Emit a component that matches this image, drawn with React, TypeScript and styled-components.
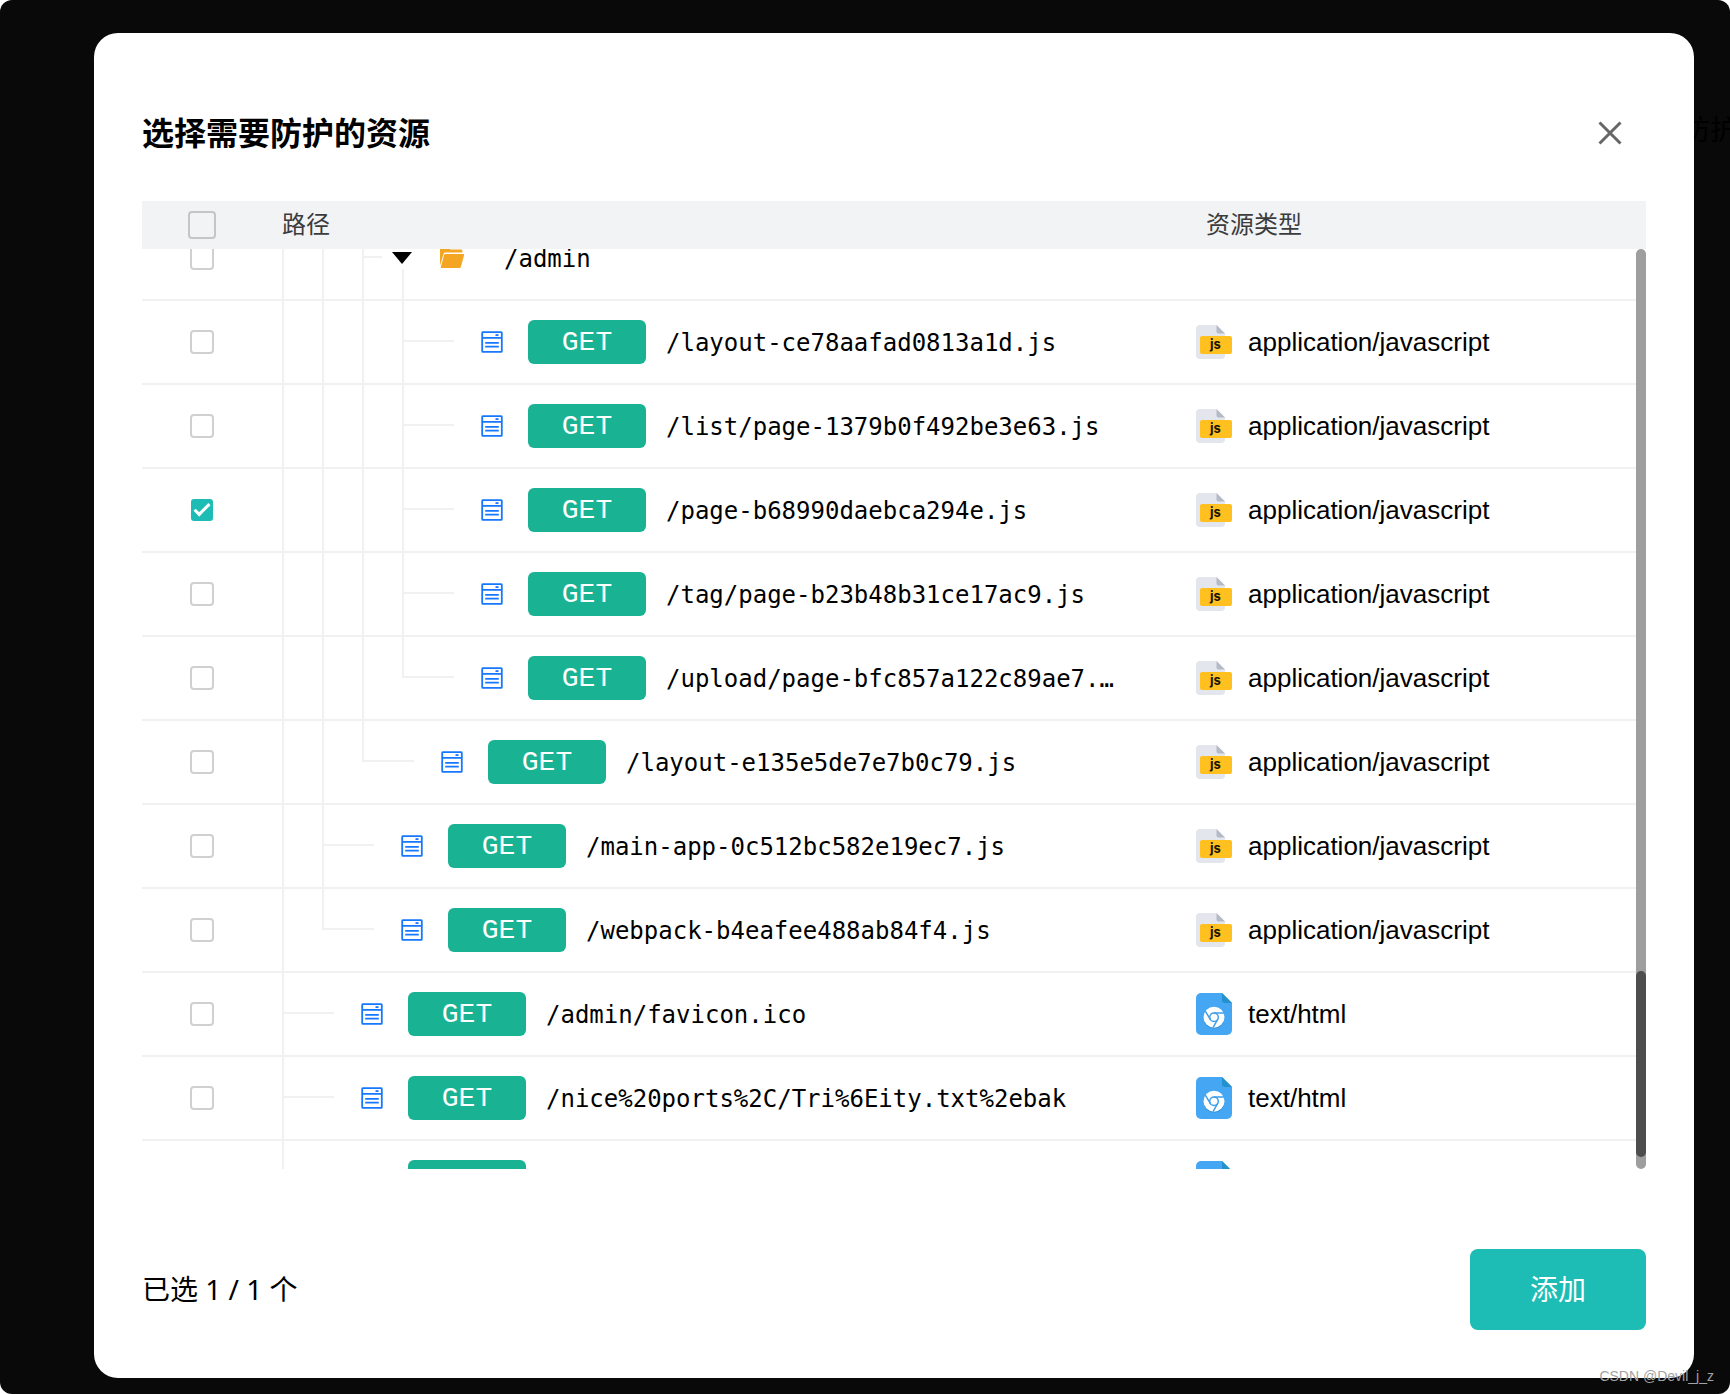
import { useLayoutEffect, useRef, useState } from 'react';
import styled, { createGlobalStyle, css } from 'styled-components';

const LINE = '#f0f1f2';
const TEAL = '#1dbcb5';
const GREEN = '#19b394';
const SANS = '"Liberation Sans", "Noto Sans CJK SC", sans-serif';
const CJK = '"Noto Sans CJK SC", sans-serif';
const MONO = '"DejaVu Sans Mono", "Noto Sans CJK SC", monospace';

const GlobalStyle = createGlobalStyle`
  *, *::before, *::after { box-sizing: border-box; }
  body { margin: 0; background: #fff; font-family: ${SANS}; color: #0a0a0a; }
`;

const Backdrop = styled.div`
  position: relative;
  display: flex;
  height: 100vh;
  padding: 33px 36px 16px 94px;
  border-radius: 12px;
  background: #090909;
  overflow: hidden;
`;

const BehindTitle = styled.span`
  position: absolute;
  top: 108px;
  right: -8px;
  font: 400 28px/40px ${CJK};
  color: #000;
`;

const Dialog = styled.section`
  position: relative;
  display: flex;
  flex: 1;
  flex-direction: column;
  min-width: 0;
  padding: 76px 48px 48px;
  border-radius: 24px;
  background: #fff;
`;

const DialogHeader = styled.header`
  display: flex;
  align-items: center;
  justify-content: space-between;
  height: 48px;
  margin-bottom: 44px;
  padding-right: 12px;
`;

const Title = styled.h2`
  margin: 0;
  padding-bottom: 4px;
  font: 700 32px/44px ${CJK};
  color: #000;
`;

const CloseButton = styled.button`
  display: grid;
  place-items: center;
  width: 48px;
  height: 48px;
  padding: 0;
  border: 0;
  background: none;
  color: #666;
  cursor: pointer;
`;

const TableFrame = styled.div`
  position: relative;
  display: flex;
  flex: 1;
  min-height: 0;
`;

const Scroller = styled.div`
  flex: 1;
  min-width: 0;
  overflow-y: auto;
  scrollbar-width: none;
`;

const ScrollTrack = styled.div`
  position: absolute;
  top: 48px;
  right: 0;
  bottom: 0;
  z-index: 2;
  display: grid;
  grid-template-rows: 721fr 186fr 12fr;
  width: 10px;
  border-radius: 5px;
  background: #9e9e9e;
`;

const ScrollThumb = styled.div`
  grid-row: 2;
  border-radius: 5px;
  background: #4d4d4d;
`;

const Table = styled.table`
  width: 100%;
  table-layout: fixed;
  border-collapse: separate;
  border-spacing: 0;
`;

const CheckCol = styled.col`
  width: 140px;
`;

const TypeCol = styled.col`
  width: 466px;
`;

const HeadCell = styled.th<{ $indent?: number }>`
  position: sticky;
  top: 0;
  z-index: 1;
  height: 48px;
  padding: 0 0 0 ${(p) => p.$indent ?? 0}px;
  background: #f2f3f5;
  text-align: left;
`;

const HeadLabel = styled.div`
  padding-bottom: 4px;
  font: 400 24px/32px ${CJK};
  color: #3c3c3c;
`;

const Cell = styled.td`
  height: 84px;
  padding: 0;
  border-bottom: 2px solid ${LINE};
`;

const CheckWrap = styled.div<{ $nudge?: boolean }>`
  display: flex;
  padding-left: ${(p) => (p.$nudge ? 46 : 48)}px;
`;

const Checkbox = styled.input<{ $size: number }>`
  appearance: none;
  display: grid;
  place-content: center;
  width: ${(p) => p.$size}px;
  height: ${(p) => p.$size}px;
  margin: 0;
  border: 2px solid #d0d0d0;
  border-radius: 4px;
  background: #fff;
  cursor: pointer;

  ${(p) => p.$size > 24 && css`
    border-color: #c4c5c7;
    background: transparent;
  `}

  &:checked {
    border: 1px solid transparent;
    background: ${TEAL} padding-box;
  }

  &:checked::before {
    content: '';
    width: 8px;
    height: 16px;
    margin-bottom: 4px;
    border: solid #fff;
    border-width: 0 3px 3px 0;
    transform: rotate(45deg);
  }
`;

const TreeRow = styled.div`
  display: flex;
  align-items: center;
  height: 82px;
  padding-right: 64px;
`;

const Guide = styled.span<{ $width: number }>`
  display: flex;
  flex: none;
  flex-direction: column;
  align-self: stretch;
  width: ${(p) => p.$width}px;
`;

const GuideTop = styled.span<{ $joined: boolean }>`
  height: 41px;
  border-left: 2px solid ${LINE};
  ${(p) => p.$joined && css`border-bottom: 2px solid ${LINE};`}
`;

const GuideBottom = styled.span`
  flex: 1;
  border-left: 2px solid ${LINE};
`;

const FileIconBox = styled.span`
  display: flex;
  flex: none;
  margin: 0 25px 0 27px;
`;

const ToggleColumn = styled.span`
  display: flex;
  flex: none;
  flex-direction: column;
  align-self: stretch;
  gap: 5px;
  width: 20px;
  margin: 0 28px 0 10px;
  padding-top: 35px;
`;

const Toggle = styled.button`
  display: flex;
  width: 20px;
  height: 12px;
  padding: 0;
  border: 0;
  background: none;
  cursor: pointer;
`;

const Stem = styled.span`
  flex: 1;
  width: 2px;
  margin-left: 10px;
  background: ${LINE};
`;

const FolderIconBox = styled.span`
  display: flex;
  flex: none;
  margin-right: 38px;
`;

const Method = styled.span`
  flex: none;
  width: 118px;
  height: 44px;
  margin-right: 20px;
  padding-top: 2px;
  border-radius: 6px;
  background: ${GREEN};
  font: 400 28px/42px "Liberation Mono", monospace;
  color: #fff;
  text-align: center;
`;

const Path = styled.span`
  min-width: 0;
  padding-top: 2px;
  overflow: hidden;
  font: 400 24px/36px ${MONO};
  color: #000;
  text-overflow: ellipsis;
  white-space: nowrap;
`;

const TypeWrap = styled.div`
  display: flex;
  align-items: center;
  gap: 16px;
  padding-left: 16px;
  font: 400 26px/36px ${SANS};
  color: #000;
`;

const DialogFooter = styled.footer`
  display: flex;
  align-items: center;
  justify-content: space-between;
  margin-top: 80px;
`;

const Count = styled.p`
  margin: 0;
  padding-bottom: 2px;
  font: 400 28px/40px "Noto Sans", ${CJK};
  color: #000;
`;

const AddButton = styled.button`
  width: 176px;
  height: 81px;
  padding: 0 0 4px;
  border: 0;
  border-radius: 8px;
  background: ${TEAL};
  font: 400 28px/40px ${CJK};
  color: #fff;
  cursor: pointer;
`;

const Signature = styled.span`
  position: absolute;
  right: 16px;
  bottom: 8px;
  font: 400 14px/20px ${SANS};
  color: #a3a3a3;
`;

function CloseIcon() {
  return (
    <svg width="24" height="24" viewBox="0 0 24 24" fill="none" stroke="currentColor" strokeWidth="3">
      <path d="M1.5 1.5 22.5 22.5M22.5 1.5 1.5 22.5" />
    </svg>
  );
}

function FileIcon() {
  return (
    <svg width="22" height="22" viewBox="0 0 22 22" fill="none" stroke="#1677ff" strokeWidth="1.8">
      <rect x="1.2" y="1.2" width="19.6" height="19.6" rx="0.6" />
      <path d="M1.4 6.800H20.600M4.200 11.800h13.600M4.200 15.600h13.600" />
      <path d="M14.500 4.100h3" />
    </svg>
  );
}

function FolderIcon() {
  return (
    <svg width="26" height="22" viewBox="0 0 26 22" fill="#f4a623">
      <path d="M0 1.400C0 .6.6 0 1.400 0h6.200l3 2.600H21c.8 0 1.400.6 1.400 1.400V5.600H5.200c-.8 0-1.300.4-1.500 1L0 18.500Z" />
      <path d="M5.400 7H23c.8 0 1.300.7 1 1.500L20.800 20c-.2.600-.700 1-1.300 1H1.500c-.6 0-.9-.4-.7-1L4.100 7.900c.2-.6.700-.9 1.300-.9Z" />
    </svg>
  );
}

function CaretIcon() {
  return (
    <svg width="20" height="12" viewBox="0 0 20 12">
      <path d="M0 0H20L10 12Z" />
    </svg>
  );
}

function JsIcon() {
  return (
    <svg width="36" height="34" viewBox="0 0 36 34">
      <path d="M4 0H20.500L29 8.500V30a4 4 0 0 1-4 4H4a4 4 0 0 1-4-4V4a4 4 0 0 1 4-4Z" fill="#e4e6ed" />
      <path d="M20.500 0 29 8.500H22.500a2 2 0 0 1-2-2Z" fill="#b4bac6" />
      <rect x="4" y="11" width="32" height="18" rx="2" fill="#ffc020" />
      <text x="19.500" y="24" textAnchor="middle" fontFamily="Inter, sans-serif" fontWeight="700" fontSize="13" fill="#1a1400">
        js
      </text>
    </svg>
  );
}

function HtmlIcon() {
  return (
    <svg width="36" height="42" viewBox="0 0 36 42">
      <path d="M5 0H26L36 10V37a5 5 0 0 1-5 5H5a5 5 0 0 1-5-5V5a5 5 0 0 1 5-5Z" fill="#45a6f3" />
      <path d="M26 0 36 10H29a3 3 0 0 1-3-3Z" fill="#2391cb" />
      <circle cx="18" cy="25" r="10.500" fill="#2f8fd8" />
      <circle cx="18" cy="24.200" r="10.500" fill="#fff" />
      <g fill="none" stroke="#3f9fea" strokeWidth="1.500">
        <circle cx="18" cy="24.200" r="4.300" />
        <path d="M18 19.900H28M14.300 26.400 9.300 18.200M21.700 26.400 17 34.600" />
      </g>
    </svg>
  );
}

type GuideKind = 'pass' | 'tee' | 'last';

interface Resource {
  path: string;
  guides: GuideKind[];
  type?: 'application/javascript' | 'text/html';
  folder?: boolean;
}

const nested = (kind: GuideKind): GuideKind[] => ['pass', 'pass', 'pass', kind];

const resources: Resource[] = [
  { path: '/admin', guides: ['pass', 'pass', 'tee'], folder: true },
  { path: '/layout-ce78aafad0813a1d.js', guides: nested('tee'), type: 'application/javascript' },
  { path: '/list/page-1379b0f492be3e63.js', guides: nested('tee'), type: 'application/javascript' },
  { path: '/page-b68990daebca294e.js', guides: nested('tee'), type: 'application/javascript' },
  { path: '/tag/page-b23b48b31ce17ac9.js', guides: nested('tee'), type: 'application/javascript' },
  { path: '/upload/page-bfc857a122c89ae7.js', guides: nested('last'), type: 'application/javascript' },
  { path: '/layout-e135e5de7e7b0c79.js', guides: ['pass', 'pass', 'last'], type: 'application/javascript' },
  { path: '/main-app-0c512bc582e19ec7.js', guides: ['pass', 'tee'], type: 'application/javascript' },
  { path: '/webpack-b4eafee488ab84f4.js', guides: ['pass', 'last'], type: 'application/javascript' },
  { path: '/admin/favicon.ico', guides: ['tee'], type: 'text/html' },
  { path: '/nice%20ports%2C/Tri%6Eity.txt%2ebak', guides: ['tee'], type: 'text/html' },
  { path: '/', guides: ['tee'], type: 'text/html' },
];

function guideWidth(kind: GuideKind, folder?: boolean) {
  if (kind === 'pass') return 40;
  return folder ? 20 : 52;
}

function ResourceRow({ item, checked, onToggle }: { item: Resource; checked: boolean; onToggle: () => void }) {
  return (
    <tr>
      <Cell>
        <CheckWrap>
          <Checkbox $size={24} type="checkbox" aria-label={item.path} checked={checked} onChange={onToggle} />
        </CheckWrap>
      </Cell>
      <Cell>
        <TreeRow>
          {item.guides.map((kind, i) => (
            <Guide key={i} $width={guideWidth(kind, item.folder)}>
              <GuideTop $joined={kind !== 'pass'} />
              {kind !== 'last' && <GuideBottom />}
            </Guide>
          ))}
          {item.folder ? (
            <>
              <ToggleColumn>
                <Toggle type="button" aria-expanded="true" aria-label={item.path}>
                  <CaretIcon />
                </Toggle>
                <Stem />
              </ToggleColumn>
              <FolderIconBox>
                <FolderIcon />
              </FolderIconBox>
            </>
          ) : (
            <>
              <FileIconBox>
                <FileIcon />
              </FileIconBox>
              <Method>GET</Method>
            </>
          )}
          <Path>{item.path}</Path>
        </TreeRow>
      </Cell>
      <Cell>
        {item.type && (
          <TypeWrap>
            {item.type === 'text/html' ? <HtmlIcon /> : <JsIcon />}
            {item.type}
          </TypeWrap>
        )}
      </Cell>
    </tr>
  );
}

export default function App() {
  const scroller = useRef<HTMLDivElement>(null);
  const [selected, setSelected] = useState<string[]>(['/page-b68990daebca294e.js']);

  useLayoutEffect(() => {
    if (scroller.current) scroller.current.scrollTop = 32;
  }, []);

  const toggle = (path: string) =>
    setSelected((now) => (now.includes(path) ? now.filter((p) => p !== path) : [...now, path]));

  return (
    <>
      <GlobalStyle />
      <Backdrop>
        <BehindTitle aria-hidden="true">防护</BehindTitle>
        <Dialog role="dialog" aria-labelledby="dialog-title">
          <DialogHeader>
            <Title id="dialog-title">选择需要防护的资源</Title>
            <CloseButton type="button" aria-label="关闭">
              <CloseIcon />
            </CloseButton>
          </DialogHeader>
          <TableFrame>
            <Scroller ref={scroller}>
              <Table>
                <colgroup>
                  <CheckCol />
                  <col />
                  <TypeCol />
                </colgroup>
                <thead>
                  <tr>
                    <HeadCell>
                      <CheckWrap $nudge>
                        <Checkbox $size={28} type="checkbox" aria-label="全选" />
                      </CheckWrap>
                    </HeadCell>
                    <HeadCell>
                      <HeadLabel>路径</HeadLabel>
                    </HeadCell>
                    <HeadCell $indent={26}>
                      <HeadLabel>资源类型</HeadLabel>
                    </HeadCell>
                  </tr>
                </thead>
                <tbody>
                  {resources.map((item) => (
                    <ResourceRow
                      key={item.path}
                      item={item}
                      checked={selected.includes(item.path)}
                      onToggle={() => toggle(item.path)}
                    />
                  ))}
                </tbody>
              </Table>
            </Scroller>
            <ScrollTrack>
              <ScrollThumb />
            </ScrollTrack>
          </TableFrame>
          <DialogFooter>
            <Count>已选 {selected.length} / 1 个</Count>
            <AddButton type="button">添加</AddButton>
          </DialogFooter>
        </Dialog>
        <Signature>CSDN @Devil_j_z</Signature>
      </Backdrop>
    </>
  );
}
